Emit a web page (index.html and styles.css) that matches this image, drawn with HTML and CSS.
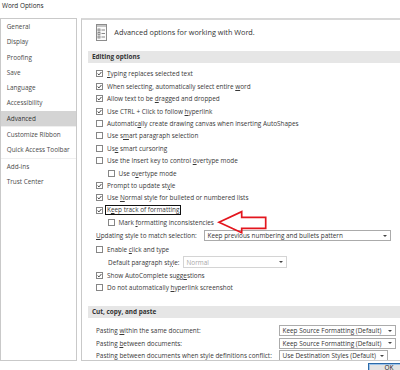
FILE: index.html
```html
<!DOCTYPE html>
<html>
<head>
<meta charset="utf-8">
<link rel="stylesheet" href="styles.css">
</head>
<body>
<div class="page">
  <div class="title">Word Options</div>
  <div class="dialog">
    <div class="nav">
      <div class="nav-item">General</div>
      <div class="nav-item">Display</div>
      <div class="nav-item">Proofing</div>
      <div class="nav-item">Save</div>
      <div class="nav-item">Language</div>
      <div class="nav-item">Accessibility</div>
      <div class="nav-item active">Advanced</div>
      <div class="nav-sep"></div>
      <div class="nav-item">Customize Ribbon</div>
      <div class="nav-item">Quick Access Toolbar</div>
      <div class="nav-sep"></div>
      <div class="nav-item">Add-ins</div>
      <div class="nav-item">Trust Center</div>
    </div>
    <div class="content">
      <div class="header">
        <svg class="hicon" width="11" height="17" viewBox="0 0 11 17">
          <rect x="0.5" y="0.5" width="10" height="16" fill="#fafafa" stroke="#8c8c8c"/>
          <rect x="1" y="1" width="9" height="2" fill="#c4c4c4"/>
          <rect x="2" y="5" width="2" height="2" fill="none" stroke="#7a7a7a" stroke-width="0.8"/>
          <rect x="2" y="8.5" width="2" height="2" fill="none" stroke="#7a7a7a" stroke-width="0.8"/>
          <rect x="2" y="12" width="2" height="2" fill="none" stroke="#7a7a7a" stroke-width="0.8"/>
          <path d="M5.5 6h3.5M5.5 9.5h3.5M5.5 13h3.5" stroke="#7a7a7a" stroke-width="0.9"/>
        </svg>
        <span class="htitle">Advanced options for working with Word.</span>
      </div>

      <div class="band">Editing options</div>
      <div class="rows">
        <div class="row"><span class="cb on"><svg width="5" height="5" viewBox="0 0 5 5"><path d="M0.6 2.6L2 3.9L4.4 1" fill="none" stroke="#333" stroke-width="0.9"/></svg></span><span><u>T</u>yping replaces selected text</span></div>
        <div class="row"><span class="cb on"><svg width="5" height="5" viewBox="0 0 5 5"><path d="M0.6 2.6L2 3.9L4.4 1" fill="none" stroke="#333" stroke-width="0.9"/></svg></span><span>When selecting, automatically select entire <u>w</u>ord</span></div>
        <div class="row"><span class="cb on"><svg width="5" height="5" viewBox="0 0 5 5"><path d="M0.6 2.6L2 3.9L4.4 1" fill="none" stroke="#333" stroke-width="0.9"/></svg></span><span>Allow text to be <u>d</u>ragged and dropped</span></div>
        <div class="row"><span class="cb on"><svg width="5" height="5" viewBox="0 0 5 5"><path d="M0.6 2.6L2 3.9L4.4 1" fill="none" stroke="#333" stroke-width="0.9"/></svg></span><span>Use CTRL + Click to follow <u>h</u>yperlink</span></div>
        <div class="row"><span class="cb"></span><span>Automatic<u>a</u>lly create drawing canvas when inserting AutoShapes</span></div>
        <div class="row"><span class="cb"></span><span>Use s<u>m</u>art paragraph selection</span></div>
        <div class="row"><span class="cb"></span><span>Us<u>e</u> smart cursoring</span></div>
        <div class="row"><span class="cb"></span><span>Use the Insert key to control <u>o</u>vertype mode</span></div>
        <div class="row indent"><span class="cb"></span><span>Use o<u>v</u>ertype mode</span></div>
        <div class="row"><span class="cb on"><svg width="5" height="5" viewBox="0 0 5 5"><path d="M0.6 2.6L2 3.9L4.4 1" fill="none" stroke="#333" stroke-width="0.9"/></svg></span><span>Prompt to update st<u>y</u>le</span></div>
        <div class="row"><span class="cb on"><svg width="5" height="5" viewBox="0 0 5 5"><path d="M0.6 2.6L2 3.9L4.4 1" fill="none" stroke="#333" stroke-width="0.9"/></svg></span><span>Use <u>N</u>ormal style for bulleted or numbered lists</span></div>
        <div class="row"><span class="cb on"><svg width="5" height="5" viewBox="0 0 5 5"><path d="M0.6 2.6L2 3.9L4.4 1" fill="none" stroke="#333" stroke-width="0.9"/></svg></span><span class="hl">K<u>e</u>ep track of formatting</span></div>
        <div class="row indent"><span class="cb"></span><span>Mark <u>f</u>ormatting inconsistencies</span></div>
        <div class="row tall">
          <span class="lbl w-upd"><u>U</u>pdating style to match selection:</span>
          <div class="dd w187"><span>Keep previous numbering and bullets pattern</span><span class="arrow"></span></div>
        </div>
        <div class="row"><span class="cb"></span><span>Enable <u>c</u>lick and type</span></div>
        <div class="row tall sub">
          <span class="lbl w-def">Default paragraph st<u>y</u>le:</span>
          <div class="dd disabled w104"><span>Normal</span><span class="arrow"></span></div>
        </div>
        <div class="row"><span class="cb on"><svg width="5" height="5" viewBox="0 0 5 5"><path d="M0.6 2.6L2 3.9L4.4 1" fill="none" stroke="#333" stroke-width="0.9"/></svg></span><span>Show AutoComplete sugg<u>e</u>stions</span></div>
        <div class="row"><span class="cb"></span><span>Do not automatically <u>h</u>yperlink screenshot</span></div>
      </div>

      <div class="band band2">Cut, copy, and paste</div>
      <div class="rows paste">
        <div class="row prow">
          <span class="lbl w-paste">Pasting <u>w</u>ithin the same document:</span>
          <div class="dd w117"><span>Keep Source Formatting (Default)</span><span class="arrow"></span></div>
        </div>
        <div class="row prow">
          <span class="lbl w-paste">Pasting <u>b</u>etween documents:</span>
          <div class="dd w117"><span>Keep Source Formatting (Default)</span><span class="arrow"></span></div>
        </div>
        <div class="row prow">
          <span class="lbl w-paste">Pasting between documents when style definitions conflict:</span>
          <div class="dd w109"><span>Use Destination Styles (Default)</span><span class="arrow"></span></div>
        </div>
      </div>
    </div>
  </div>
  <div class="footer">
    <div class="btn">OK</div>
  </div>

  <svg class="callout" width="54" height="28" viewBox="0 0 54 28">
    <polygon points="3,13.3 25.7,2.7 25.7,8.3 49.7,8.3 49.7,19.3 25.7,19.3 25.7,23.7" fill="none" stroke="#e3161e" stroke-width="1.7" stroke-linejoin="miter"/>
  </svg>
</div>
</body>
</html>
```

FILE: styles.css
```css
html, body {
  margin: 0;
  padding: 0;
}

body {
  font-family: "Open Sans", "Liberation Sans", sans-serif;
  font-size: 6.4px;
  color: #383838;
  background: #ffffff;
  overflow: hidden;
}

.page {
  position: relative;
  width: 420px;
  height: 370px;
  overflow: hidden;
}

.title {
  height: 18px;
  line-height: 12px;
  padding-left: 2px;
  color: #262626;
}

.dialog {
  display: flex;
  gap: 4px;
  height: 343px;
}

.nav {
  flex: none;
  width: 77px;
  box-sizing: border-box;
  border: 1px solid #c9c9c9;
  background: #ffffff;
}

.nav-item {
  height: 15.3px;
  line-height: 15.3px;
  padding-left: 5.7px;
  color: #4a4a4a;
  white-space: nowrap;
}

.nav-item.active {
  background: #d4d4d4;
  color: #333;
}

.nav-sep {
  height: 1px;
  background: #efefef;
}

.content {
  flex: 1;
  box-sizing: border-box;
  border: 1px solid #c9c9c9;
  border-top: 2px solid #d8d8d8;
  overflow: hidden;
  background: #ffffff;
}

.header {
  height: 30.7px;
  box-sizing: border-box;
  padding: 0 0 6px 14px;
  display: flex;
  align-items: center;
}

.hicon {
  flex: none;
  display: block;
}

.htitle {
  margin-left: 7.3px;
  font-size: 7.3px;
  color: #333;
  white-space: nowrap;
}

.band {
  margin-left: 6px;
  height: 12.6px;
  line-height: 12.6px;
  padding-left: 4px;
  background: #e6e6e6;
  font-weight: 700;
  color: #333;
  white-space: nowrap;
}

.band2 {
  margin-top: 11.7px;
}

.rows {
  margin-left: 6px;
  padding-top: 4.5px;
}

.rows.paste {
  padding-top: 6px;
}

.row {
  display: flex;
  align-items: center;
  height: 12.4px;
  padding-left: 8px;
  white-space: nowrap;
}

.row.indent {
  padding-left: 19.5px;
}

.row.tall {
  height: 14.1px;
}

.row.sub {
  height: 14px;
  padding-left: 20px;
}

.row.prow {
  height: 12.6px;
}

.cb {
  flex: none;
  width: 7px;
  height: 7px;
  box-sizing: border-box;
  border: 1px solid #868686;
  background: #fff;
  margin-right: 4px;
  display: flex;
  align-items: center;
  justify-content: center;
}

.cb svg {
  display: block;
}

.hl {
  border: 1px solid #111;
  padding: 0 1px;
  margin-left: -2px;
  line-height: 7.7px;
}

.lbl {
  flex: none;
  overflow: hidden;
}

.w-upd {
  width: 108px;
}

.w-def {
  width: 75px;
}

.w-paste {
  width: 183px;
}

.dd {
  flex: none;
  display: flex;
  align-items: center;
  height: 11px;
  box-sizing: border-box;
  border: 1px solid #ababab;
  background: #fff;
  padding-left: 2.5px;
  color: #333;
  overflow: hidden;
}

.dd .arrow {
  margin-left: auto;
  margin-right: 3px;
  width: 0;
  height: 0;
  border-left: 2px solid transparent;
  border-right: 2px solid transparent;
  border-top: 2.5px solid #444;
}

.dd.disabled {
  border-color: #d4d4d4;
  color: #a6a6a6;
  height: 12px;
}

.w187 { width: 187px; }
.w104 { width: 104px; }
.w117 { width: 117px; }
.w109 { width: 109px; }

.footer {
  display: flex;
  justify-content: flex-end;
  padding-top: 1.5px;
  padding-right: 10px;
}

.btn {
  width: 42px;
  height: 18px;
  box-sizing: border-box;
  border: 1px solid #2c6aa8;
  box-shadow: inset 0 0 0 1px #9cc3ea;
  background: #e3e3e3;
  text-align: center;
  line-height: 7.5px;
  color: #222;
}

.callout {
  position: absolute;
  left: 216px;
  top: 209px;
}
```
